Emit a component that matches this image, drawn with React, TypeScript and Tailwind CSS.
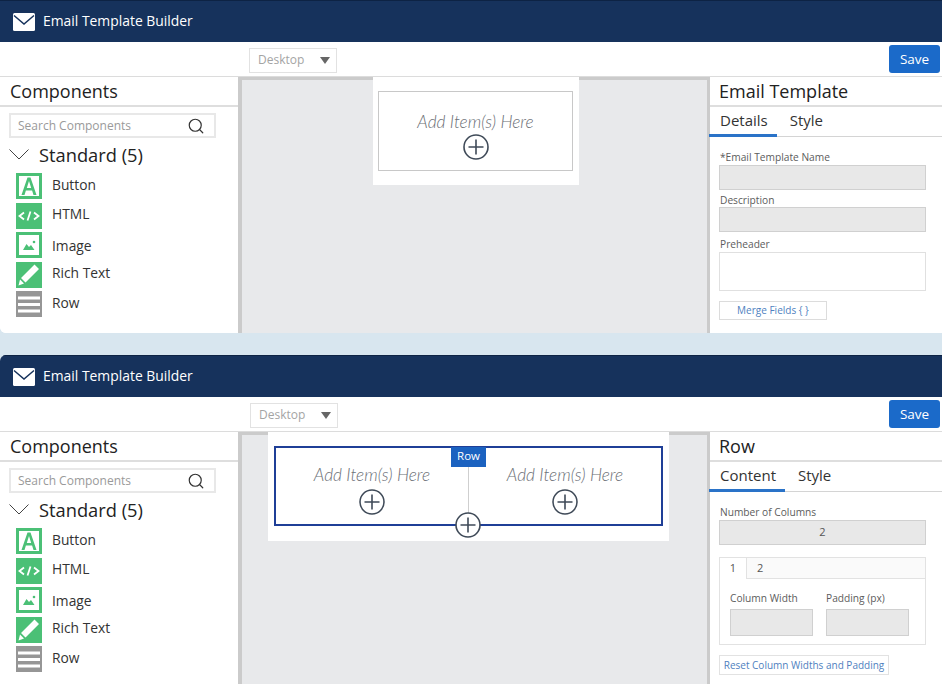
import { Search } from "lucide-react";

function PlusCircle({ className = "" }: { className?: string }) {
  return (
    <svg viewBox="0 0 26 26" className={"h-[26px] w-[26px] " + className}>
      <circle cx="13" cy="13" r="12" fill="#fff" stroke="#3f4a58" strokeWidth="1.6" />
      <path d="M13 5.500v15M5.500 13h15" stroke="#3f4a58" strokeWidth="1.6" />
    </svg>
  );
}

function AddItems({ gap = "mt-[2px]" }: { gap?: string }) {
  return (
    <div className="flex flex-col items-center">
      <span className="font-['Lato'] text-[17.3px] leading-5 italic font-light text-[#6b6f76]">Add Item(s) Here</span>
      <PlusCircle className={gap} />
    </div>
  );
}

function ButtonIcon() {
  return (
    <svg viewBox="0 0 26 26" className="h-[26px] w-[26px]">
      <rect width="26" height="26" fill="#4bc076" />
      <rect x="3" y="3" width="20" height="20" fill="#fff" />
      <path d="M5.500 22 11.500 4.500h3L20.500 22h-3l-1.400-4.500h-6.200L8.500 22zM10.800 15h4.400L13 8z" fill="#4bc076" />
    </svg>
  );
}

function HtmlIcon() {
  return (
    <svg viewBox="0 0 26 26" className="h-[26px] w-[26px]">
      <rect width="26" height="26" fill="#4bc076" />
      <path d="M8 9.500 3.500 13 8 16.500M18 9.500l4.500 3.500-4.500 3.500M14.500 8.500l-3 9" fill="none" stroke="#fff" strokeWidth="1.800" />
    </svg>
  );
}

function ImageIcon() {
  return (
    <svg viewBox="0 0 26 26" className="h-[26px] w-[26px]">
      <rect width="26" height="26" fill="#4bc076" />
      <rect x="3" y="3" width="20" height="20" fill="#fff" />
      <path d="M7 18l3.500-6 2.500 3 2-2 3.500 5z" fill="#4bc076" />
      <circle cx="18" cy="10" r="1.300" fill="#4bc076" />
    </svg>
  );
}

function PencilIcon() {
  return (
    <svg viewBox="0 0 26 26" className="h-[26px] w-[26px]">
      <rect width="26" height="26" fill="#4bc076" />
      <path d="M18.500 2.500 23 7 9.500 20.500 5 16zM4 17.500 8 21.500 2.500 23.500z" fill="#fff" />
    </svg>
  );
}

function RowIcon() {
  return (
    <svg viewBox="0 0 26 26" className="h-[26px] w-[26px]">
      <rect width="26" height="26" fill="#969696" />
      <rect x="2" y="5.500" width="22" height="3" fill="#fff" />
      <rect x="2" y="12" width="22" height="3" fill="#fff" />
      <rect x="2" y="18.500" width="22" height="3" fill="#fff" />
    </svg>
  );
}

const items = [
  { label: "Button", icon: <ButtonIcon />, text: "pb-[2px]" },
  { label: "HTML", icon: <HtmlIcon />, text: "pb-[2px]" },
  { label: "Image", icon: <ImageIcon />, text: "pt-[3px]" },
  { label: "Rich Text", icon: <PencilIcon />, text: "pb-[2px]" },
  { label: "Row", icon: <RowIcon />, text: "pb-[1px]" },
];

function Sidebar() {
  return (
    <aside className="flex w-[242px] shrink-0 flex-col border-r-4 border-[#cbcbcb] bg-white">
      <h2 className="h-[30px] border-b-2 border-[#dedede] pl-[10px] text-[18px] leading-[28px] text-[#222]">Components</h2>
      <div className="mt-[6px] ml-[9px] flex h-[25px] w-[207px] items-center justify-between border-2 border-[#e8e8e8] pr-[9px] pl-[7px]">
        <span className="text-[12px] text-[#9a9a9a]">Search Components</span>
        <Search size={18} strokeWidth={1.6} className="text-[#333]" />
      </div>
      <div className="mt-[3px] flex h-[27px] items-center pl-[9px]">
        <svg viewBox="0 0 20 11" className="h-[11px] w-[20px]">
          <path d="M.5.5 10 10 19.500.5" fill="none" stroke="#444" strokeWidth="1" />
        </svg>
        <span className="ml-[10px] text-[18.300px] text-[#222]">Standard (5)</span>
      </div>
      <ul className="mt-[5px] flex flex-col gap-[3.500px] pl-[16px]">
        {items.map((it) => (
          <li key={it.label} className="flex h-[26px] items-center">
            {it.icon}
            <span className={"ml-[10px] text-[13.800px] text-[#333] " + it.text}>{it.label}</span>
          </li>
        ))}
      </ul>
    </aside>
  );
}

function Label({ children }: { children: React.ReactNode }) {
  return <label className="block h-[14px] pl-[1px] text-[10.200px] leading-[14px] text-[#5c5c5c]">{children}</label>;
}

function GrayField({ className = "" }: { className?: string }) {
  return <div className={"border border-[#d0d0d0] bg-[#e8e8e8] " + className} />;
}

function PanelHead({ title, tabs, active }: { title: string; tabs: string[]; active: string }) {
  return (
    <>
      <h2 className="h-[30px] border-b-2 border-[#dedede] pl-[9px] text-[18px] leading-[28px] text-[#222]">{title}</h2>
      <div className="-ml-px flex h-[30px] gap-[10px] border-b border-[#d4d4d4]">
        {tabs.map((t) => (
          <span
            key={t}
            className={
              t === active
                ? "-mb-px border-b-[3px] border-[#2a73c8] pr-[9px] pl-[11px] text-[15px] leading-[26px] text-[#333]"
                : "px-[3px] text-[15px] leading-[26px] text-[#333]"
            }
          >
            {t}
          </span>
        ))}
      </div>
    </>
  );
}

function EmailPanel() {
  return (
    <>
      <PanelHead title="Email Template" tabs={["Details", "Style"]} active="Details" />
      <div className="flex w-[216px] flex-col pt-[13px] pl-[9px]">
        <Label>*Email Template Name</Label>
        <GrayField className="mt-[1px] h-[25px]" />
        <div className="mt-[3px]">
          <Label>Description</Label>
        </div>
        <GrayField className="h-[25px]" />
        <div className="mt-[5px]">
          <Label>Preheader</Label>
        </div>
        <div className="mt-[1px] h-[39px] border border-[#e0e0e0] bg-white" />
        <div className="mt-[10px] flex h-[19px] w-[108px] items-center justify-center border border-[#dcdcdc] text-[10px] text-[#4f7fc0]">
          Merge Fields {"{ }"}
        </div>
      </div>
    </>
  );
}

function RowPanel() {
  return (
    <>
      <PanelHead title="Row" tabs={["Content", "Style"]} active="Content" />
      <div className="flex w-[216px] flex-col pt-[13px] pl-[9px]">
        <Label>Number of Columns</Label>
        <div className="mt-[1px] flex h-[25px] items-center justify-center border border-[#d0d0d0] bg-[#e8e8e8] text-[11px] text-[#555]">2</div>
        <div className="mt-[12px] h-[88px] border border-[#e2e2e2]">
          <div className="flex h-[21px] border-b border-[#e2e2e2] bg-[#fafafa] text-[11px] leading-[20px] text-[#555]">
            <span className="-mb-px w-[27px] border-r border-[#e2e2e2] bg-white text-center">1</span>
            <span className="pl-[10px]">2</span>
          </div>
          <div className="flex gap-[13px] pt-[12px] pl-[10px]">
            <div className="w-[83px]">
              <span className="block h-[18px] text-[10.200px] leading-[14px] text-[#5c5c5c]">Column Width</span>
              <GrayField className="h-[27px]" />
            </div>
            <div className="w-[83px]">
              <span className="block h-[18px] text-[10.200px] leading-[14px] text-[#5c5c5c]">Padding (px)</span>
              <GrayField className="h-[27px]" />
            </div>
          </div>
        </div>
        <div className="mt-[10px] flex h-[20px] w-[170px] items-center justify-center whitespace-nowrap border border-[#e2e2e2] text-[10px] text-[#4f7fc0]">
          Reset Column Widths and Padding
        </div>
      </div>
    </>
  );
}

function Builder({ second = false }: { second?: boolean }) {
  return (
    <div className={second ? "flex h-[329px] flex-col overflow-hidden rounded-tl-[6px] bg-white" : "flex h-[333px] flex-col overflow-hidden rounded-bl-[6px] bg-white"}>
      <header className="flex h-[42px] shrink-0 items-center border-t border-[#0d2344] bg-[#16325c] pl-[13px] text-white">
        <svg viewBox="0 0 22 18" className="h-[18px] w-[22px]">
          <rect width="22" height="18" rx="1.500" fill="#fff" />
          <path d="M1 2.500 11 11 21 2.500" fill="none" stroke="#16325c" strokeWidth="1.500" />
        </svg>
        <span className="ml-[8px] text-[13.900px]">Email Template Builder</span>
      </header>
      <div className={second ? "flex h-[35px] shrink-0 items-center justify-between border-b border-[#dcdcdc] pr-[2px] pl-[250px]" : "flex h-[35px] shrink-0 items-center justify-between border-b border-[#dcdcdc] pr-[2px] pl-[249px]"}>
        <div className="mt-[2px] flex h-[25px] w-[88px] items-center justify-between border border-[#e2e2e2] pr-[6px] pl-[8px] text-[12px] text-[#a4a4a4]">
          Desktop
          <svg viewBox="0 0 10 7" className="h-[7px] w-[10px]">
            <path d="M0 0h10L5 7z" fill="#666" />
          </svg>
        </div>
        <button className="h-[28px] w-[51px] rounded-[3px] bg-[#1b6ac9] text-[13.500px] text-white">Save</button>
      </div>
      <div className="flex min-h-0 flex-1">
        <Sidebar />
        <main className={second ? "flex-1 border-t-[3px] border-r-[3px] border-[#cbcbcb] bg-[#e8e9eb] pl-[26px]" : "flex-1 border-t-[3px] border-r-[3px] border-[#cbcbcb] bg-[#e8e9eb] pl-[131px]"}>
          {second ? (
            <div className="-mt-[3px] h-[109px] w-[401px] bg-white px-[6px] pt-[14px]">
              <div className="relative flex h-[80px] border-2 border-[#1f3f97]">
                <div className="flex flex-1 justify-center pt-[17px]">
                  <AddItems gap="mt-[4px]" />
                </div>
                <div className="flex flex-1 justify-center border-l border-[#cfcfcf] pt-[17px]">
                  <AddItems gap="mt-[4px]" />
                </div>
                <span className="absolute -top-[1px] left-[175px] h-[20px] w-[35px] bg-[#1b62c0] text-center text-[11.500px] leading-[18px] text-white">Row</span>
                <PlusCircle className="absolute -bottom-[14px] left-[179px]" />
              </div>
            </div>
          ) : (
            <div className="-mt-[3px] h-[108px] w-[206px] bg-white pt-[14px] pr-[6px] pl-[5px]">
              <div className="flex h-[80px] justify-center border border-[#c8c8c8] pt-[20px]">
                <AddItems />
              </div>
            </div>
          )}
        </main>
        <section className="w-[232px] shrink-0 bg-white">{second ? <RowPanel /> : <EmailPanel />}</section>
      </div>
    </div>
  );
}

export default function App() {
  return (
    <div className="flex h-[684px] flex-col gap-[22px] overflow-hidden bg-[#d8e6ef] font-['Open_Sans',sans-serif]">
      <Builder />
      <Builder second />
    </div>
  );
}
